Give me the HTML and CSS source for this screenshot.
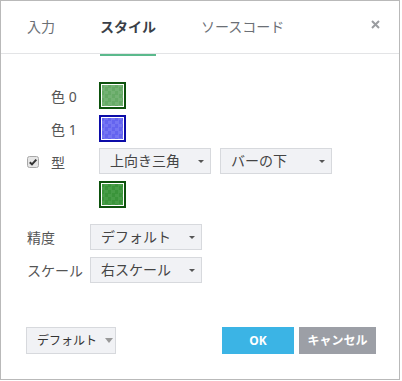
FILE: index.html
```html
<!DOCTYPE html>
<html lang="ja">
<head>
    <meta charset="UTF-8">
    <title>スタイル</title>
    <link rel="stylesheet" href="styles.css">
</head>
<body>
    <div class="dialog">
        <div class="tabs">
            <div class="tab">入力</div>
            <div class="tab active">スタイル</div>
            <div class="tab">ソースコード</div>
            <div class="close">
                <svg width="9" height="9" viewBox="0 0 9 9"><path d="M1 1L8 8M8 1L1 8" stroke="#9a9ca0" stroke-width="2"/></svg>
            </div>
        </div>

        <div class="style-grid">
            <div></div>
            <div class="label">色 0</div>
            <div class="swatch green"></div>

            <div></div>
            <div class="label">色 1</div>
            <div class="swatch blue"></div>

            <div class="check">
                <svg width="12" height="12" viewBox="0 0 12 12">
                    <rect x="0.5" y="0.5" width="11" height="11" rx="2" fill="#e6e6e6" stroke="#a8a8a8"/>
                    <path d="M2.8 6.2L5 8.4L9.3 3.6" fill="none" stroke="#333" stroke-width="2"/>
                </svg>
            </div>
            <div class="label">型</div>
            <div class="selects">
                <div class="select">上向き三角<span class="arrow"></span></div>
                <div class="select">バーの下<span class="arrow"></span></div>
            </div>

            <div></div>
            <div></div>
            <div class="swatch dark"></div>
        </div>

        <div class="opt-grid">
            <div class="label">精度</div>
            <div class="select">デフォルト<span class="arrow"></span></div>
            <div class="label">スケール</div>
            <div class="select">右スケール<span class="arrow"></span></div>
        </div>

        <div class="footer">
            <div class="btn-default">デフォルト<span class="tri"></span></div>
            <div class="btn ok">OK</div>
            <div class="btn cancel">キャンセル</div>
        </div>
    </div>
</body>
</html>
```

FILE: styles.css
```css
body {
    margin: 0;
    font-family: "Noto Sans", "Noto Sans CJK JP", sans-serif;
    font-size: 14px;
    color: #555;
    background: #fff;
}
.dialog {
    width: 400px;
    height: 380px;
    box-sizing: border-box;
    border: 1px solid #b9b9b9;
    display: flex;
    flex-direction: column;
}
.tabs {
    display: flex;
    height: 52px;
    padding: 0 19px 0 26px;
    border-bottom: 1px solid #e3e4e6;
}
.tab {
    display: flex;
    align-items: center;
    height: 50px;
    padding-bottom: 3px;
    margin-right: 45px;
    color: #6b6f75;
    font-size: 14px;
    border-bottom: 2px solid transparent;
    margin-bottom: -1px;
}
.tab.active {
    color: #3a3f48;
    font-weight: bold;
    border-bottom-color: #5bb98c;
}
.close {
    margin-left: auto;
    display: flex;
    align-items: center;
    padding-bottom: 5px;
}
.style-grid {
    display: grid;
    grid-template-columns: 24px 48px auto;
    grid-auto-rows: 27px;
    row-gap: 6px;
    align-items: center;
    padding: 28px 0 0 26px;
}
.label {
    color: #555;
    white-space: nowrap;
}
.check {
    display: flex;
    align-items: center;
}
.swatch {
    width: 27px;
    height: 27px;
    box-sizing: border-box;
    border: 2px solid #0c4f0c;
    padding: 1px;
    background-clip: content-box;
    background-size: 7px 7px;
}
.green {
    border-color: #0d520d;
    background-color: #66aa66;
    background-image: conic-gradient(#74b274 25%, transparent 0 50%, #74b274 0 75%, transparent 0);
}
.blue {
    border-color: #0c0ca8;
    background-color: #6464ef;
    background-image: conic-gradient(#7575f3 25%, transparent 0 50%, #7575f3 0 75%, transparent 0);
}
.dark {
    border-color: #0d520d;
    background-color: #3a943a;
    background-image: conic-gradient(#479d47 25%, transparent 0 50%, #479d47 0 75%, transparent 0);
}
.selects {
    display: flex;
    gap: 9px;
    align-self: start;
}
.select {
    position: relative;
    width: 112px;
    height: 26px;
    box-sizing: border-box;
    border: 1px solid #d7d9dd;
    background: #f1f2f5;
    color: #444;
    padding-left: 10px;
    line-height: 24px;
    white-space: nowrap;
}
.arrow {
    position: absolute;
    right: 6px;
    top: 11px;
    border-left: 3px solid transparent;
    border-right: 3px solid transparent;
    border-top: 3px solid #555;
}
.opt-grid {
    display: grid;
    grid-template-columns: 63px auto;
    grid-auto-rows: 26px;
    row-gap: 7px;
    align-items: center;
    padding: 16px 0 0 26px;
}
.footer {
    margin-top: auto;
    display: flex;
    align-items: center;
    padding: 0 23px 25px 25px;
}
.btn-default {
    width: 90px;
    height: 27px;
    box-sizing: border-box;
    border: 1px solid #d7d9dd;
    background: #f1f2f5;
    color: #333;
    font-size: 12px;
    line-height: 25px;
    padding-left: 10px;
    display: flex;
    align-items: center;
    gap: 8px;
    margin-right: auto;
}
.tri {
    border-left: 4px solid transparent;
    border-right: 4px solid transparent;
    border-top: 5px solid #999;
}
.btn {
    height: 27px;
    line-height: 27px;
    text-align: center;
    color: #fff;
    font-size: 12px;
    font-weight: bold;
}
.ok {
    width: 72px;
    background: #3bb4e5;
    margin-right: 5px;
}
.cancel {
    width: 77px;
    background: #9c9fa6;
}
```
